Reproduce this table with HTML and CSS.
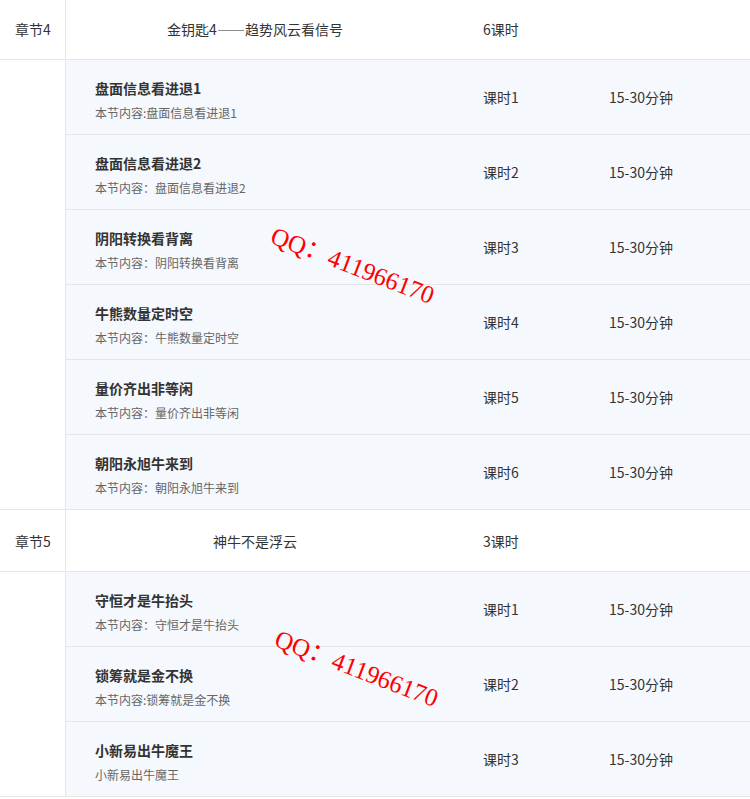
FILE: index.html
```html
<!DOCTYPE html>
<html lang="zh-CN">
<head>
    <meta charset="UTF-8">
    <title>课程目录</title>
    <link rel="stylesheet" href="styles.css">
</head>
<body>
    <div class="catalog">
        <div class="chapter">
            <div class="chapter-head">
                <div class="chapter-no">章节4</div>
                <div class="chapter-title">金钥匙4——趋势风云看信号</div>
                <div class="chapter-count">6课时</div>
            </div>
            <div class="chapter-body">
                <div class="chapter-side"></div>
                <div class="lesson-list">
                    <div class="lesson">
                        <div class="lesson-info">
                            <p class="lesson-name">盘面信息看进退1</p>
                            <p class="lesson-desc">本节内容:盘面信息看进退1</p>
                        </div>
                        <div class="lesson-no">课时1</div>
                        <div class="lesson-time">15-30分钟</div>
                    </div>
                    <div class="lesson">
                        <div class="lesson-info">
                            <p class="lesson-name">盘面信息看进退2</p>
                            <p class="lesson-desc">本节内容：盘面信息看进退2</p>
                        </div>
                        <div class="lesson-no">课时2</div>
                        <div class="lesson-time">15-30分钟</div>
                    </div>
                    <div class="lesson">
                        <div class="lesson-info">
                            <p class="lesson-name">阴阳转换看背离</p>
                            <p class="lesson-desc">本节内容：阴阳转换看背离</p>
                        </div>
                        <div class="lesson-no">课时3</div>
                        <div class="lesson-time">15-30分钟</div>
                    </div>
                    <div class="lesson">
                        <div class="lesson-info">
                            <p class="lesson-name">牛熊数量定时空</p>
                            <p class="lesson-desc">本节内容：牛熊数量定时空</p>
                        </div>
                        <div class="lesson-no">课时4</div>
                        <div class="lesson-time">15-30分钟</div>
                    </div>
                    <div class="lesson">
                        <div class="lesson-info">
                            <p class="lesson-name">量价齐出非等闲</p>
                            <p class="lesson-desc">本节内容：量价齐出非等闲</p>
                        </div>
                        <div class="lesson-no">课时5</div>
                        <div class="lesson-time">15-30分钟</div>
                    </div>
                    <div class="lesson">
                        <div class="lesson-info">
                            <p class="lesson-name">朝阳永旭牛来到</p>
                            <p class="lesson-desc">本节内容：朝阳永旭牛来到</p>
                        </div>
                        <div class="lesson-no">课时6</div>
                        <div class="lesson-time">15-30分钟</div>
                    </div>
                </div>
            </div>
        </div>

        <div class="chapter">
            <div class="chapter-head">
                <div class="chapter-no">章节5</div>
                <div class="chapter-title">神牛不是浮云</div>
                <div class="chapter-count">3课时</div>
            </div>
            <div class="chapter-body">
                <div class="chapter-side"></div>
                <div class="lesson-list">
                    <div class="lesson">
                        <div class="lesson-info">
                            <p class="lesson-name">守恒才是牛抬头</p>
                            <p class="lesson-desc">本节内容：守恒才是牛抬头</p>
                        </div>
                        <div class="lesson-no">课时1</div>
                        <div class="lesson-time">15-30分钟</div>
                    </div>
                    <div class="lesson">
                        <div class="lesson-info">
                            <p class="lesson-name">锁筹就是金不换</p>
                            <p class="lesson-desc">本节内容:锁筹就是金不换</p>
                        </div>
                        <div class="lesson-no">课时2</div>
                        <div class="lesson-time">15-30分钟</div>
                    </div>
                    <div class="lesson">
                        <div class="lesson-info">
                            <p class="lesson-name">小新易出牛魔王</p>
                            <p class="lesson-desc">小新易出牛魔王</p>
                        </div>
                        <div class="lesson-no">课时3</div>
                        <div class="lesson-time">15-30分钟</div>
                    </div>
                </div>
            </div>
        </div>

        <!-- watermarks laid over the table -->
        <div class="watermark mark-one">QQ：411966170</div>
        <div class="watermark mark-two">QQ：411966170</div>
    </div>
</body>
</html>
```

FILE: styles.css
```css
body {
    margin: 0;
    padding: 0;
    background-color: #fff;
    font-family: "Noto Sans CJK SC", "Microsoft YaHei", sans-serif;
    color: #333;
}

.catalog {
    position: relative;
    width: 750px;
    margin-top: -2px;
}

.chapter {
    border-bottom: 1px solid #e6e6e6;
}

.chapter-head {
    display: grid;
    grid-template-columns: 66px 417px 126px 1fr;
    align-items: center;
    height: 61px;
    border-bottom: 1px solid #e6e6e6;
    font-size: 14px;
}

.chapter-no {
    display: flex;
    align-items: center;
    height: 100%;
    padding-left: 15px;
    border-right: 1px solid #e6e6e6;
}

.chapter-title {
    padding-right: 39px;
    text-align: center;
}

.chapter-body {
    display: grid;
    grid-template-columns: 66px 1fr;
}

.chapter-side {
    border-right: 1px solid #e6e6e6;
}

.lesson {
    display: grid;
    grid-template-columns: 417px 126px 1fr;
    align-items: center;
    height: 74px;
    background-color: #f5f8fc;
    border-bottom: 1px solid #e6e6e6;
    font-size: 14px;
}

.lesson:last-child {
    border-bottom: none;
}

.lesson-info {
    padding-left: 29px;
    padding-top: 7px;
}

.lesson-name {
    margin: 0;
    font-weight: bold;
    line-height: 20px;
}

.lesson-desc {
    margin: 5px 0 0;
    font-size: 12px;
    line-height: 20px;
    color: #666;
}

.watermark {
    position: absolute;
    color: #f00;
    font-family: "Liberation Serif", serif;
    font-size: 25px;
    line-height: 1;
    white-space: nowrap;
    transform-origin: 0 50%;
    transform: rotate(21deg);
}

.mark-one {
    left: 272px;
    top: 224px;
}

.mark-two {
    left: 276px;
    top: 627px;
}
```
